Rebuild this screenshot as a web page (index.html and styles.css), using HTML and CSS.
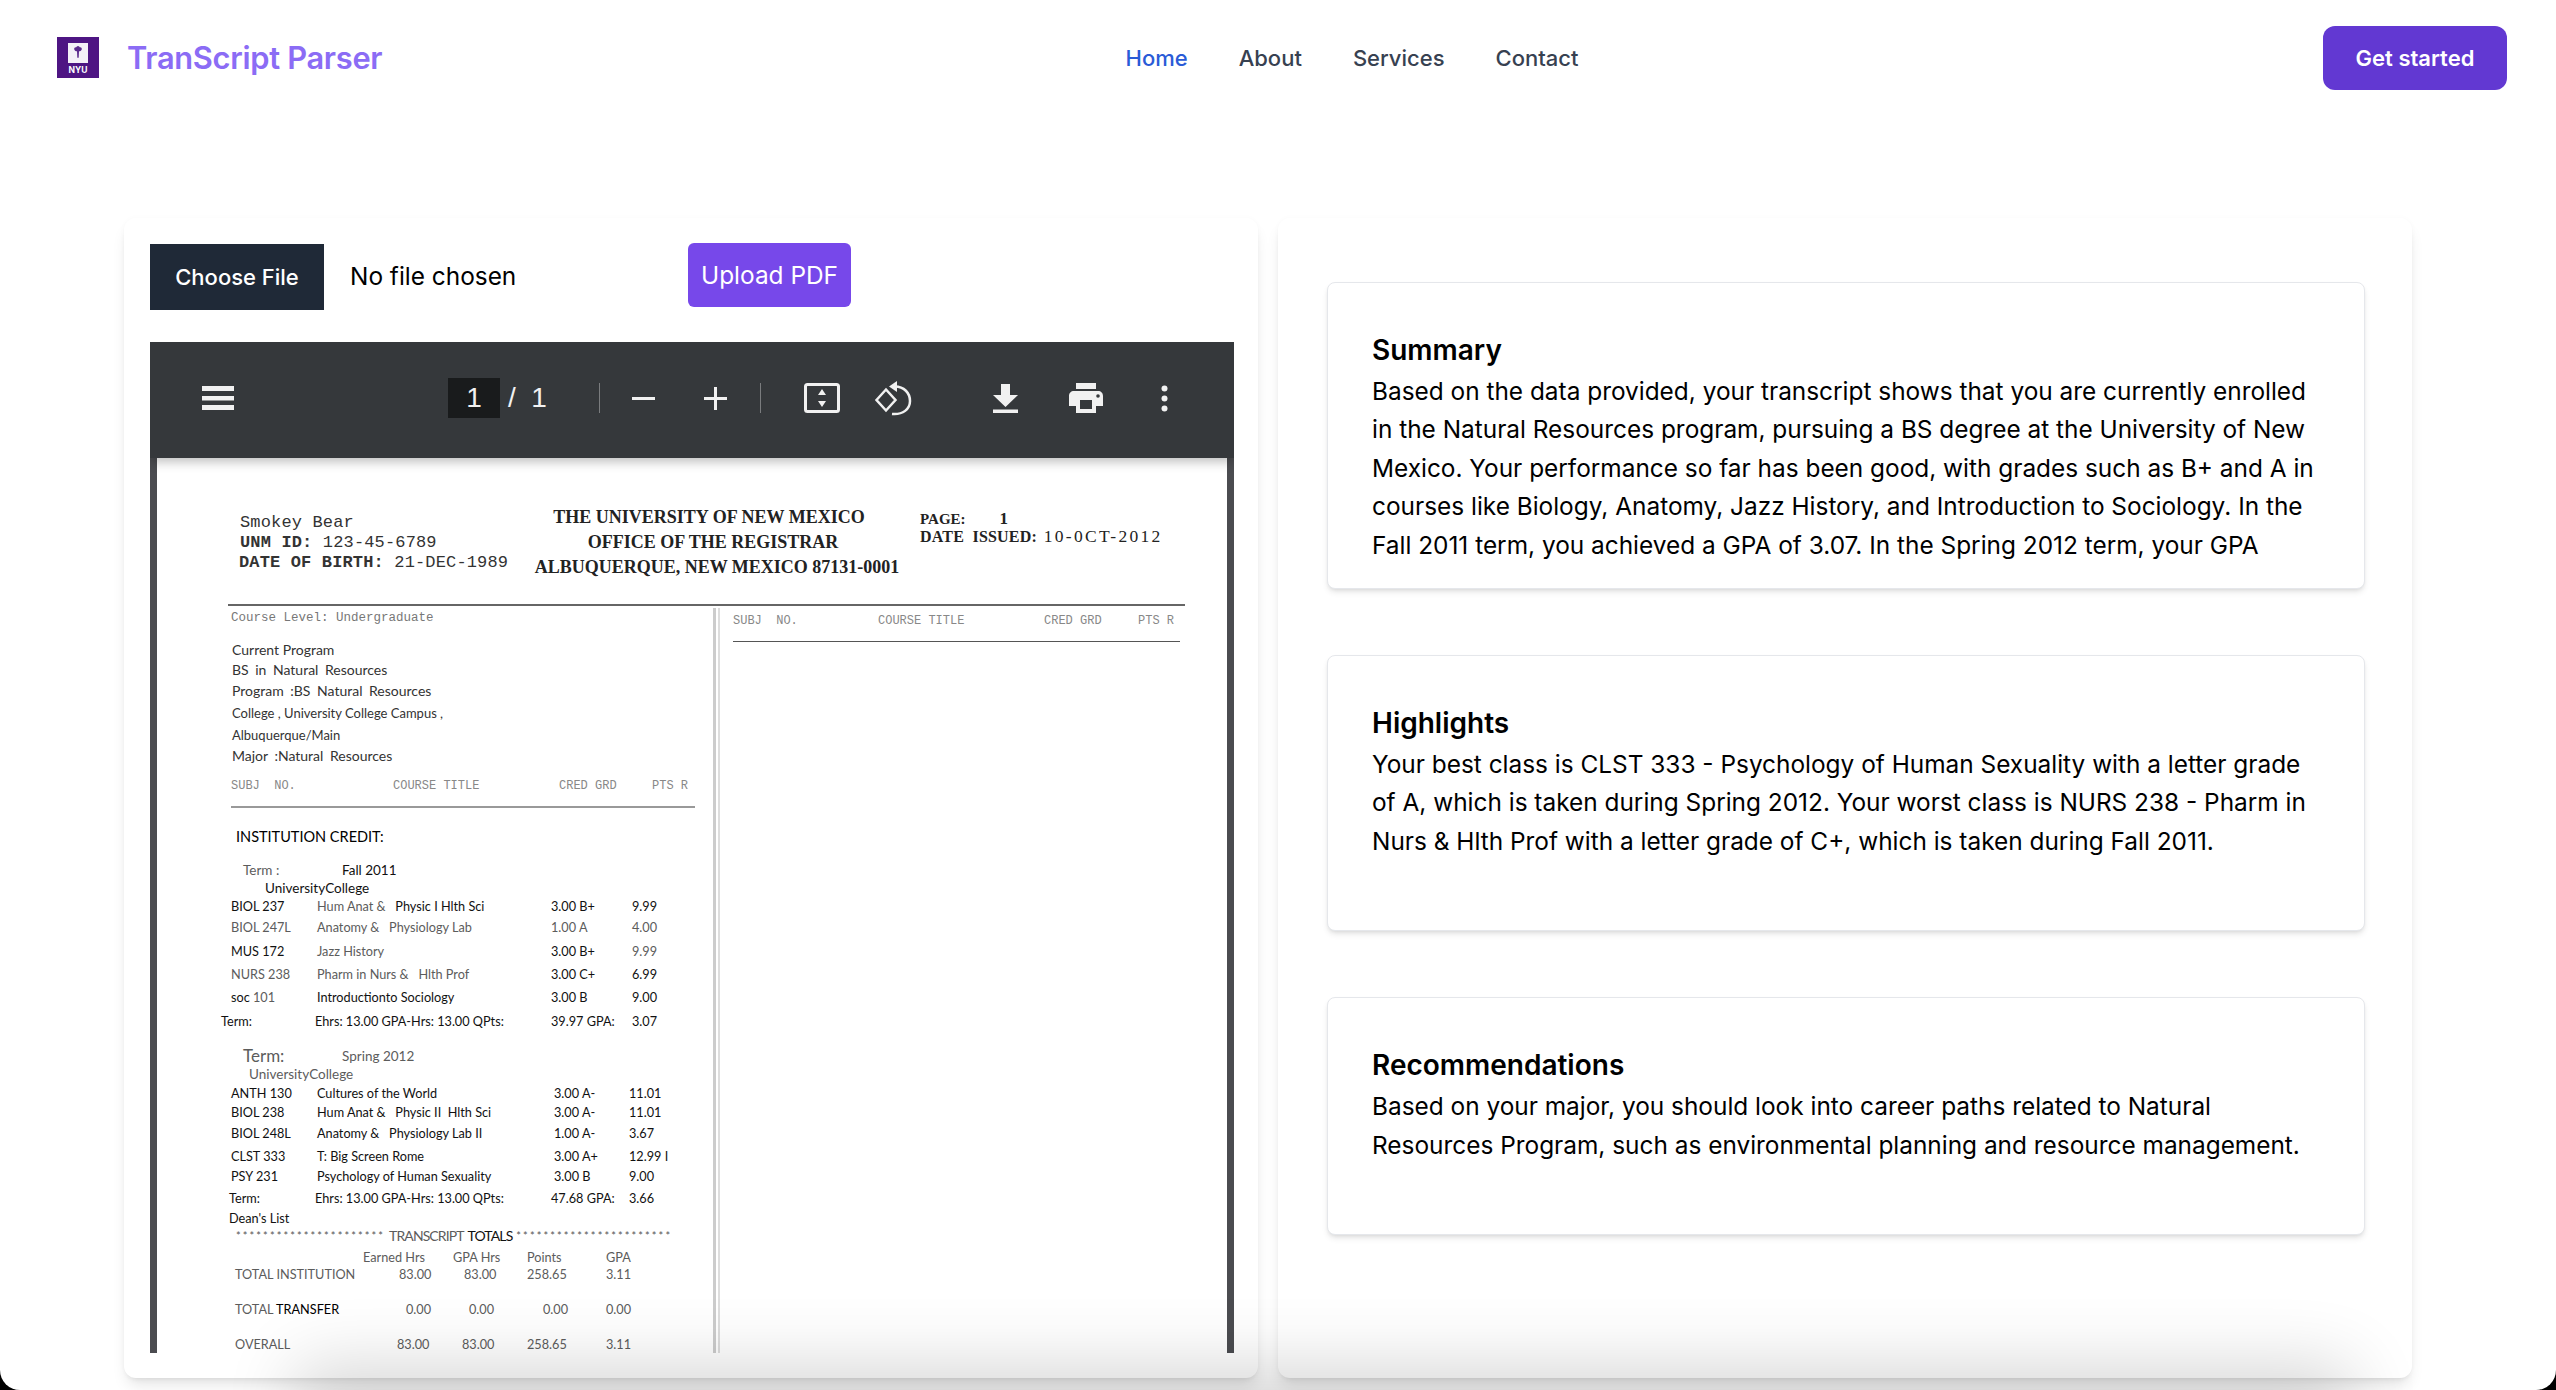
FILE: index.html
```html
<!DOCTYPE html>
<html lang="en">

<head>
    <meta charset="UTF-8">
    <title>TranScript Parser</title>
    <link rel="stylesheet" href="styles.css">
</head>

<body>
    <div class="page">
        <header class="topbar">
            <a class="brand" href="#">
                <svg class="brand-logo" viewBox="0 0 42 41">
                    <rect width="42" height="41" fill="#4e1583" />
                    <rect x="11" y="6" width="20" height="20" fill="#f4f0f7" />
                    <path d="M21 9c1 0 1.500 .8 1.800 1.300 1.200-.3 2.200 .6 2 1.900-.2 1.200-1.400 2-2.800 2.100l-.3 6.500h-1.400l-.3-6.500c-1.400-.1-2.600-.9-2.800-2.100-.2-1.300 .8-2.200 2-1.900 .3-.5 .8-1.300 1.800-1.300z" fill="#5b2a8c" />
                    <text x="21" y="36" class="brand-nyu">NYU</text>
                </svg>
                <span class="brand-name">TranScript Parser</span>
            </a>
            <nav class="mainnav">
                <a class="active" href="#">Home</a>
                <a href="#">About</a>
                <a href="#">Services</a>
                <a href="#">Contact</a>
            </nav>
            <button class="cta">Get started</button>
        </header>

        <main class="columns">
            <section class="card card-left">
                <div class="upload-row">
                    <label class="file-btn">Choose File<input class="file-input" type="file"></label>
                    <span class="file-name">No file chosen</span>
                    <button class="upload-btn">Upload PDF</button>
                </div>

                <div class="viewer">
                    <div class="toolbar">
                        <svg class="ic ic-menu" viewBox="0 0 32 24"><path d="M0 0h32v5H0zM0 10h32v4.500H0zM0 19h32v5H0z" fill="#f1f1f1" /></svg>
                        <span class="page-box">1</span>
                        <span class="page-total">/ &nbsp;1</span>
                        <i class="tool-sep tool-sep-a"></i>
                        <svg class="ic ic-minus" viewBox="0 0 23 23"><path d="M0 10h23v3H0z" fill="#f1f1f1" /></svg>
                        <svg class="ic ic-plus" viewBox="0 0 23 23"><path d="M0 10h10V0h3v10h10v3H13v10h-3V13H0z" fill="#f1f1f1" /></svg>
                        <i class="tool-sep tool-sep-b"></i>
                        <svg class="ic ic-fit" viewBox="0 0 36 30">
                            <rect x="1.500" y="1.500" width="33" height="27" rx="2" fill="none" stroke="#f1f1f1" stroke-width="3" />
                            <path d="M18 6l4 6h-8zM18 24l-4-6h8z" fill="#f1f1f1" />
                        </svg>
                        <svg class="ic ic-rotate" viewBox="0 0 37 35">
                            <path d="M1.500 19L11 8.500 20.500 19 11 29.500z" fill="none" stroke="#f1f1f1" stroke-width="2.500" />
                            <path d="M20 5.500c9 0 15 6.500 15 14.500S28 34 17 33" fill="none" stroke="#f1f1f1" stroke-width="2.500" />
                            <path d="M22 0v11l-8-5.500z" fill="#f1f1f1" />
                        </svg>
                        <svg class="ic ic-download" viewBox="0 0 25 29"><path d="M8 0h9v11h8L12.500 23 0 11h8zM0 25.500h25V29H0z" fill="#f1f1f1" /></svg>
                        <svg class="ic ic-print" viewBox="0 0 34 30">
                            <path d="M7 0h20v6H7zM5 8h24c3 0 5 2 5 5v10h-7v7H7v-7H0V13c0-3 2-5 5-5z" fill="#f1f1f1" />
                            <path d="M11 17h12v9H11z" fill="#35383b" />
                            <circle cx="29" cy="13" r="1.800" fill="#35383b" />
                        </svg>
                        <svg class="ic ic-more" viewBox="0 0 7 27"><circle cx="3.500" cy="3.500" r="3" fill="#f1f1f1" /><circle cx="3.500" cy="13.500" r="3" fill="#f1f1f1" /><circle cx="3.500" cy="23.500" r="3" fill="#f1f1f1" /></svg>
                    </div>
                    <div class="sheet">
                        <div class="doc-head">
                            <div class="head-id">
                                <div>Smokey Bear</div>
                                <div><b>UNM ID:</b> 123-45-6789</div>
                                <div class="head-id-indent"><b>DATE OF BIRTH:</b> 21-DEC-1989</div>
                            </div>
                            <div class="head-title">
                                <div class="title-a">THE UNIVERSITY OF NEW MEXICO</div>
                                <div>OFFICE OF THE REGISTRAR</div>
                                <div class="title-c">ALBUQUERQUE, NEW MEXICO 87131-0001</div>
                            </div>
                            <div class="head-page">
                                <div class="head-page-a"><b>PAGE:</b><span>1</span></div>
                                <div class="head-page-b"><b>DATE&nbsp; ISSUED:</b> 10-0CT-2012</div>
                            </div>
                        </div>
                        <div class="doc-rule"></div>
                        <div class="doc-body">
                            <div class="doc-left">
                                <div class="level">Course Level: Undergraduate</div>
                                <div class="program">
                                    <span>Current Program</span>
                                    <span class="wide">BS in Natural Resources</span>
                                    <span class="wide">Program :BS Natural Resources</span>
                                    <span class="small">College , University College Campus ,</span>
                                    <span class="small">Albuquerque/Main</span>
                                    <span class="wide">Major :Natural Resources</span>
                                </div>
                                <div class="col-heads">
                                    <span>SUBJ&nbsp; NO.</span><span>COURSE TITLE</span><span>CRED GRD</span><span>PTS R</span>
                                </div>
                                <div class="heads-rule"></div>
                                <div class="inst">INSTITUTION CREDIT:</div>

                                <div class="term term-fall">
                                    <span class="dim">Term :</span><span>Fall 2011</span>
                                    <span class="college">UniversityCollege</span>
                                </div>
                                <div class="courses courses-fall">
                                    <span>BIOL 237</span><span><span class="dim">Hum Anat &amp;</span>&nbsp;&nbsp; Physic I Hlth Sci</span><span>3.00 B+</span><span>9.99</span>
                                    <span class="dim">BIOL 247L</span><span class="dim">Anatomy &amp;&nbsp;&nbsp; Physiology Lab</span><span class="dim">1.00 A</span><span class="dim">4.00</span>
                                    <span>MUS 172</span><span class="dim">Jazz History</span><span>3.00 B+</span><span class="dim">9.99</span>
                                    <span class="dim">NURS 238</span><span class="dim">Pharm in Nurs &amp;&nbsp;&nbsp; Hlth Prof</span><span>3.00 C+</span><span>6.99</span>
                                    <span>soc <span class="dim">101</span></span><span>Introductionto Sociology</span><span>3.00 B</span><span>9.00</span>
                                    <span class="term-label">Term:</span><span class="ehrs">Ehrs: 13.00 GPA-Hrs: 13.00 QPts:</span><span>39.97 GPA:</span><span>3.07</span>
                                </div>

                                <div class="term term-spring">
                                    <span class="dim term-big">Term:</span><span class="dim">Spring 2012</span>
                                    <span class="college college-spring dim">UniversityCollege</span>
                                </div>
                                <div class="courses courses-spring">
                                    <span>ANTH 130</span><span>Cultures of the World</span><span>3.00 A-</span><span>11.01</span>
                                    <span>BIOL 238</span><span>Hum Anat &amp;&nbsp;&nbsp; Physic II&nbsp; Hlth Sci</span><span>3.00 A-</span><span>11.01</span>
                                    <span>BIOL 248L</span><span>Anatomy &amp;&nbsp;&nbsp; Physiology Lab II</span><span>1.00 A-</span><span>3.67</span>
                                    <span>CLST 333</span><span>T: Big Screen Rome</span><span>3.00 A+</span><span>12.99 I</span>
                                    <span>PSY 231</span><span>Psychology of Human Sexuality</span><span>3.00 B</span><span>9.00</span>
                                    <span class="term-label-b">Term:</span><span class="ehrs">Ehrs: 13.00 GPA-Hrs: 13.00 QPts:</span><span class="gpa-b">47.68 GPA:</span><span>3.66</span>
                                    <span class="term-label-b deans">Dean's List</span>
                                </div>

                                <div class="totals-title"><span class="stars">**********************</span><span class="totals-word dim">TRANSCRIPT</span><span class="totals-word">TOTALS</span><span class="stars">***********************</span></div>
                                <div class="totals">
                                    <span></span><span class="dim">Earned Hrs</span><span class="dim">GPA Hrs</span><span class="dim">Points</span><span class="dim">GPA</span>
                                    <span class="dim">TOTAL INSTITUTION</span><span class="dim off-36">83.00</span><span class="dim off-11">83.00</span><span class="dim">258.65</span><span class="dim">3.11</span>
                                    <span class="dim">TOTAL<span class="black"> TRANSFER</span></span><span class="dim off-43">0.00</span><span class="dim off-16">0.00</span><span class="dim off-16">0.00</span><span class="dim">0.00</span>
                                    <span class="dim">OVERALL</span><span class="dim off-34">83.00</span><span class="dim off-9">83.00</span><span class="dim">258.65</span><span class="dim">3.11</span>
                                </div>
                            </div>
                            <div class="doc-split"></div>
                            <div class="doc-right">
                                <div class="col-heads col-heads-right">
                                    <span>SUBJ&nbsp; NO.</span><span>COURSE TITLE</span><span>CRED GRD</span><span>PTS R</span>
                                </div>
                                <div class="heads-rule-right"></div>
                            </div>
                        </div>
                    </div>
                </div>
            </section>

            <section class="card card-right">
                <div class="panel panel-summary">
                    <h2>Summary</h2>
                    <p>Based on the data provided, your transcript shows that you are currently enrolled in the Natural Resources program, pursuing a BS degree at the University of New Mexico. Your performance so far has been good, with grades such as B+ and A in courses like Biology, Anatomy, Jazz History, and Introduction to Sociology. In the Fall 2011 term, you achieved a GPA of 3.07. In the Spring 2012 term, your GPA</p>
                </div>
                <div class="panel">
                    <h2>Highlights</h2>
                    <p>Your best class is CLST 333 - Psychology of Human Sexuality with a letter grade of A, which is taken during Spring 2012. Your worst class is NURS 238 - Pharm in Nurs &amp; Hlth Prof with a letter grade of C+, which is taken during Fall 2011.</p>
                </div>
                <div class="panel">
                    <h2>Recommendations</h2>
                    <p>Based on your major, you should look into career paths related to Natural Resources Program, such as environmental planning and resource management.</p>
                </div>
            </section>
        </main>

        <div class="bottom-glow"></div>
    </div>
</body>

</html>
```

FILE: styles.css
```css
* {
    box-sizing: border-box;
}

html,
body {
    margin: 0;
    height: 100%;
    background-color: #000;
    overflow: hidden;
}

.page {
    position: relative;
    height: 1390px;
    background-color: #fff;
    border-radius: 0 0 20px 20px;
    overflow: hidden;
    font-family: Inter, "Liberation Sans", sans-serif;
    color: #111;
}

/* top bar */
.topbar {
    display: flex;
    align-items: center;
    justify-content: space-between;
    height: 116px;
    padding: 0 49px 0 57px;
}

.brand {
    display: flex;
    align-items: center;
    gap: 28px;
    width: 324px;
    padding-bottom: 2px;
    text-decoration: none;
}

.brand-logo {
    flex: none;
    width: 42px;
    height: 41px;
}

.brand-nyu {
    font-family: Inter, sans-serif;
    font-size: 8.500px;
    font-weight: 700;
    fill: #fff;
    text-anchor: middle;
}

.brand-name {
    font-size: 30.800px;
    font-weight: 600;
    letter-spacing: -0.3px;
    color: #8b6cf5;
    white-space: nowrap;
}

.mainnav {
    display: flex;
    gap: 51px;
}

.mainnav a {
    font-size: 22px;
    font-weight: 500;
    color: #374151;
    text-decoration: none;
}

.mainnav a.active {
    color: #2a5bd7;
}

.cta {
    width: 184px;
    height: 64px;
    border: 0;
    border-radius: 12px;
    background-color: #6238d2;
    color: #fff;
    font-family: inherit;
    font-size: 22px;
    font-weight: 600;
}

/* two cards */
.columns {
    display: flex;
    gap: 20px;
    padding: 102px 0 0 124px;
}

.card {
    flex: none;
    width: 1134px;
    height: 1160px;
    background-color: #fff;
    border-radius: 12px;
    box-shadow: 0 10px 15px -3px rgba(0, 0, 0, .1), 0 4px 6px -4px rgba(0, 0, 0, .1), 0 0 6px rgba(0, 0, 0, .025);
}

.card-left {
    padding: 25px 24px 0 26px;
}

.card-right {
    padding: 64px 47px 0 49px;
}

/* upload row */
.upload-row {
    display: flex;
    align-items: flex-start;
    height: 99px;
    padding-top: 1px;
}

.file-btn {
    width: 174px;
    height: 66px;
    background-color: #1f2937;
    color: #fff;
    font-size: 22px;
    font-weight: 500;
    line-height: 66px;
    text-align: center;
}

.file-input {
    display: none;
}

.file-name {
    width: 364px;
    padding-left: 26px;
    font-size: 24.400px;
    line-height: 64px;
    color: #000;
}

.upload-btn {
    width: 163px;
    height: 64px;
    margin-top: -1px;
    border: 0;
    border-radius: 6px;
    background-color: #7748ea;
    color: #fff;
    font-family: inherit;
    font-size: 24.400px;
}

/* pdf viewer */
.viewer {
    height: 1011px;
    background-color: #4b4c50;
    overflow: hidden;
}

.toolbar {
    position: relative;
    z-index: 1;
    display: flex;
    align-items: center;
    height: 116px;
    padding: 0 0 4px 52px;
    background-color: #35383b;
    box-shadow: 0 4px 10px rgba(0, 0, 0, .25);
    color: #f1f1f1;
    font-family: "Liberation Sans", sans-serif;
}

.ic {
    flex: none;
}

.ic-menu {
    width: 32px;
    height: 24px;
}

.page-box {
    width: 52px;
    height: 40px;
    margin-left: 214px;
    background-color: #191b1c;
    font-size: 28px;
    line-height: 40px;
    text-align: center;
}

.page-total {
    width: 99px;
    padding-left: 8px;
    font-size: 28px;
}

.tool-sep {
    flex: none;
    width: 1px;
    height: 30px;
    background-color: #7a7c7e;
}

.ic-minus {
    width: 23px;
    height: 23px;
    margin-left: 32px;
}

.ic-plus {
    width: 23px;
    height: 23px;
    margin-left: 49px;
}

.tool-sep-b {
    margin-left: 33px;
}

.ic-fit {
    width: 36px;
    height: 30px;
    margin-left: 43px;
}

.ic-rotate {
    width: 37px;
    height: 35px;
    margin-left: 35px;
}

.ic-download {
    width: 25px;
    height: 29px;
    margin-left: 81px;
}

.ic-print {
    width: 34px;
    height: 30px;
    margin-left: 51px;
}

.ic-more {
    width: 7px;
    height: 27px;
    margin-left: 58px;
}

/* scanned transcript */
.sheet {
    width: 1070px;
    height: 895px;
    margin-left: 7px;
    background-color: #fff;
    overflow: hidden;
}

.doc-head {
    display: flex;
    height: 146px;
    padding-top: 46px;
    color: #222;
}

.head-id {
    width: 280px;
    margin-left: 83px;
    padding-top: 9px;
    font-family: "Liberation Mono", monospace;
    font-size: 17px;
    letter-spacing: .15px;
    line-height: 20px;
    white-space: nowrap;
    color: #333;
}

.head-id-indent {
    margin-left: -1px;
}

.head-title {
    width: 386px;
    padding-top: 1px;
    font-family: "Liberation Serif", serif;
    font-size: 18px;
    font-weight: 700;
    line-height: 25px;
    text-align: center;
    white-space: nowrap;
}

.title-a {
    padding-right: 8px;
}

.title-c {
    padding-left: 8px;
}

.head-page {
    margin-left: 14px;
    padding-top: 6px;
    font-family: "Liberation Serif", serif;
    font-size: 15px;
    line-height: 17px;
    white-space: nowrap;
}

.head-page-a span {
    margin-left: 34px;
    font-size: 17px;
    font-weight: 700;
}

.head-page-b {
    font-size: 17.500px;
    letter-spacing: 2.300px;
}

.head-page-b b {
    font-size: 16px;
    letter-spacing: .2px;
}

.doc-rule {
    height: 2px;
    margin: 0 42px 0 71px;
    background-color: #666;
}

.doc-body {
    display: flex;
    padding-top: 2px;
}

.doc-left {
    width: 482px;
    margin-left: 74px;
    font-family: Lato, sans-serif;
    font-size: 12.700px;
    line-height: 12px;
    color: #111;
    white-space: nowrap;
}

.dim {
    color: #5c5c5c;
}

.black {
    color: #000;
}

.level {
    height: 20px;
    margin-bottom: 12px;
    font-family: "Liberation Mono", monospace;
    font-size: 12.500px;
    line-height: 20px;
    color: #777;
}

.program {
    display: grid;
    grid-template-rows: 20px 20px 21px 24px 20px 22px;
    align-items: center;
    margin-left: 1px;
    font-size: 14px;
    color: #333;
}

.program .small {
    font-size: 13px;
}

.program .wide {
    word-spacing: 3px;
}

.col-heads {
    display: grid;
    grid-template-columns: 162px 166px 93px auto;
    align-items: center;
    height: 20px;
    margin-top: 9px;
    font-family: "Liberation Mono", monospace;
    font-size: 12px;
    color: #888;
}

.heads-rule {
    width: 464px;
    height: 2px;
    margin-top: 10px;
    background-color: #999;
}

.inst {
    height: 20px;
    margin-top: 19px;
    margin-left: 5px;
    font-size: 14.500px;
    line-height: 20px;
    color: #000;
}

.term {
    display: grid;
    grid-template-columns: 99px auto;
    grid-auto-rows: 18px;
    align-items: center;
    margin-left: 12px;
    font-size: 13.500px;
}

.term-fall {
    margin-top: 14px;
}

.term-spring {
    margin-top: 13px;
    grid-template-rows: 20px 16px;
}

.term-big {
    font-size: 17px;
}

.college {
    grid-column: 1 / 3;
    margin-left: 22px;
}

.college-spring {
    margin-left: 6px;
}

.courses {
    display: grid;
    align-items: center;
}

.courses-fall {
    grid-template-columns: 86px 234px 81px auto;
    grid-template-rows: 18px 24px 24px 22px 24px 24px;
}

.courses-spring {
    grid-template-columns: 86px 237px 75px auto;
    grid-template-rows: 22px 16px 26px 20px 20px 24px 16px;
}

.term-label {
    margin-left: -10px;
}

.term-label-b {
    margin-left: -2px;
}

.ehrs {
    margin-left: -2px;
}

.gpa-b {
    margin-left: -3px;
}

.deans {
    grid-column: 1 / 3;
}

.totals-title {
    display: flex;
    align-items: center;
    gap: 4px;
    height: 20px;
    margin-left: 5px;
    font-size: 14px;
}

.totals-word {
    letter-spacing: -.9px;
}

.stars {
    font-size: 11px;
    letter-spacing: 2.100px;
    color: #555;
}

.totals {
    display: grid;
    grid-template-columns: 128px 90px 74px 79px auto;
    grid-template-rows: 22px 12px 58px 12px;
    align-items: center;
    margin-left: 4px;
}

.off-9 {
    margin-left: 9px;
}

.off-11 {
    margin-left: 11px;
}

.off-16 {
    margin-left: 16px;
}

.off-34 {
    margin-left: 34px;
}

.off-36 {
    margin-left: 36px;
}

.off-43 {
    margin-left: 43px;
}

.doc-split {
    flex: none;
    width: 7px;
    height: 750px;
    border-left: 3px solid #ccc;
    border-right: 2px solid #ddd;
}

.doc-right {
    width: 447px;
    margin-left: 13px;
}

.col-heads-right {
    grid-template-columns: 145px 166px 94px auto;
    margin-top: 3px;
}

.heads-rule-right {
    height: 1px;
    margin-top: 10px;
    background-color: #555;
}

/* result panels */
.panel {
    margin-bottom: 66px;
    padding: 48px 44px 70px;
    background-color: #fff;
    border: 1px solid #e5e7eb;
    border-radius: 8px;
    box-shadow: 0 4px 6px -1px rgba(0, 0, 0, .1), 0 2px 4px -2px rgba(0, 0, 0, .1);
}

.panel-summary {
    padding-bottom: 24px;
}

.panel h2 {
    margin: 0 0 3px;
    font-size: 28px;
    font-weight: 600;
    line-height: 38px;
    color: #000;
}

.panel p {
    margin: 0;
    font-size: 24.400px;
    line-height: 38.400px;
    color: #000;
}

/* grey glow rising from the bottom edge */
.bottom-glow {
    position: absolute;
    left: 320px;
    right: 230px;
    bottom: -60px;
    height: 60px;
    box-shadow: 0 0 70px 25px rgba(0, 0, 0, .16);
}
```
